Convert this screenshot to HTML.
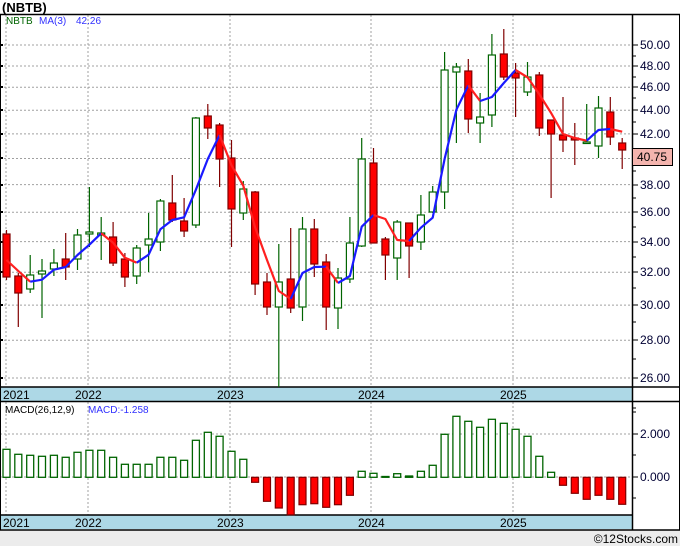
<!DOCTYPE html>
<html><head><meta charset="utf-8"><style>
html,body{margin:0;padding:0;background:#fff;}
svg{display:block;font-family:"Liberation Sans",sans-serif;}
</style></head><body>
<svg width="680" height="546" viewBox="0 0 680 546" xmlns="http://www.w3.org/2000/svg">
<rect x="0" y="0" width="680" height="546" fill="#fff"/>
<rect x="0" y="530" width="680" height="16" fill="#ececec"/>
<text x="2" y="12" font-size="13" font-weight="bold" fill="#000">(NBTB)</text>
<!-- grids -->
<g stroke="#a0a0a0" stroke-width="1" stroke-dasharray="2,2" fill="none">
<line x1="0" x2="632" y1="45" y2="45"/><line x1="0" x2="632" y1="66" y2="66"/><line x1="0" x2="632" y1="87.3" y2="87.3"/><line x1="0" x2="632" y1="110.2" y2="110.2"/><line x1="0" x2="632" y1="133.9" y2="133.9"/><line x1="0" x2="632" y1="158.5" y2="158.5"/><line x1="0" x2="632" y1="184.6" y2="184.6"/><line x1="0" x2="632" y1="212.2" y2="212.2"/><line x1="0" x2="632" y1="241.6" y2="241.6"/><line x1="0" x2="632" y1="272.2" y2="272.2"/><line x1="0" x2="632" y1="305.1" y2="305.1"/><line x1="0" x2="632" y1="340.2" y2="340.2"/><line x1="0" x2="632" y1="378" y2="378"/>
<line x1="0" x2="632" y1="434" y2="434"/><line x1="0" x2="632" y1="477" y2="477"/>
<line x1="6" x2="6" y1="15" y2="387"/><line x1="88" x2="88" y1="15" y2="387"/><line x1="230" x2="230" y1="15" y2="387"/><line x1="371" x2="371" y1="15" y2="387"/><line x1="513" x2="513" y1="15" y2="387"/>
<line x1="6" x2="6" y1="402" y2="515"/><line x1="88" x2="88" y1="402" y2="515"/><line x1="230" x2="230" y1="402" y2="515"/><line x1="371" x2="371" y1="402" y2="515"/><line x1="513" x2="513" y1="402" y2="515"/>
</g>
<!-- date bands -->
<rect x="0" y="387" width="632" height="14" fill="#add8e6"/>
<rect x="0" y="515" width="632" height="14" fill="#add8e6"/>
<g font-size="12" fill="#000">
<text x="3" y="399">2021</text><text x="75" y="399">2022</text><text x="217" y="399">2023</text><text x="358" y="399">2024</text><text x="500" y="399">2025</text>
<text x="3" y="527">2021</text><text x="75" y="527">2022</text><text x="217" y="527">2023</text><text x="358" y="527">2024</text><text x="500" y="527">2025</text>
</g>
<!-- frame -->
<g stroke="#000" fill="none">
<line x1="0" x2="680" y1="14.5" y2="14.5" stroke-width="1.5"/>
<line x1="0" x2="680" y1="387" y2="387" stroke-width="1.5"/>
<line x1="0" x2="680" y1="401.5" y2="401.5" stroke-width="1.5"/>
<line x1="0" x2="632" y1="515" y2="515" stroke-width="1.5"/>
<line x1="0" x2="680" y1="530" y2="530" stroke-width="1.5"/>
<line x1="632.5" x2="632.5" y1="14" y2="530" stroke-width="1.5"/>
<line x1="679.5" x2="679.5" y1="14" y2="530" stroke-width="1"/>
<line x1="0.5" x2="0.5" y1="14" y2="530" stroke-width="1"/>
</g>
<g stroke="#000" stroke-width="2">
<line x1="0" x2="3" y1="45" y2="45"/><line x1="0" x2="3" y1="66" y2="66"/><line x1="0" x2="3" y1="87" y2="87"/><line x1="0" x2="3" y1="110" y2="110"/><line x1="0" x2="3" y1="134" y2="134"/><line x1="0" x2="3" y1="158" y2="158"/><line x1="0" x2="3" y1="185" y2="185"/><line x1="0" x2="3" y1="212" y2="212"/><line x1="0" x2="3" y1="242" y2="242"/><line x1="0" x2="3" y1="272" y2="272"/><line x1="0" x2="3" y1="305" y2="305"/><line x1="0" x2="3" y1="340" y2="340"/><line x1="0" x2="3" y1="378" y2="378"/>
</g>
<g stroke="#000" stroke-width="1">
<line x1="632" x2="638" y1="45" y2="45"/><line x1="632" x2="638" y1="66" y2="66"/><line x1="632" x2="638" y1="87" y2="87"/><line x1="632" x2="638" y1="110" y2="110"/><line x1="632" x2="638" y1="134" y2="134"/><line x1="632" x2="638" y1="158" y2="158"/><line x1="632" x2="638" y1="185" y2="185"/><line x1="632" x2="638" y1="212" y2="212"/><line x1="632" x2="638" y1="242" y2="242"/><line x1="632" x2="638" y1="272" y2="272"/><line x1="632" x2="638" y1="305" y2="305"/><line x1="632" x2="638" y1="340" y2="340"/><line x1="632" x2="638" y1="378" y2="378"/>
<line x1="632" x2="636" y1="56" y2="56"/><line x1="632" x2="636" y1="77" y2="77"/><line x1="632" x2="636" y1="98" y2="98"/><line x1="632" x2="636" y1="122" y2="122"/><line x1="632" x2="636" y1="171" y2="171"/><line x1="632" x2="636" y1="198" y2="198"/><line x1="632" x2="636" y1="227" y2="227"/><line x1="632" x2="636" y1="257" y2="257"/><line x1="632" x2="636" y1="288" y2="288"/><line x1="632" x2="636" y1="322" y2="322"/><line x1="632" x2="636" y1="359" y2="359"/>
<line x1="632" x2="638" y1="434" y2="434"/><line x1="632" x2="638" y1="477" y2="477"/><line x1="632" x2="636" y1="412" y2="412"/><line x1="632" x2="636" y1="455" y2="455"/><line x1="632" x2="636" y1="498" y2="498"/>
<line x1="632" x2="636" y1="408" y2="408"/>
</g>
<g font-size="12" fill="#000033">
<text x="640" y="49">50.00</text><text x="640" y="70">48.00</text><text x="640" y="91">46.00</text><text x="640" y="114">44.00</text><text x="640" y="138">42.00</text><text x="640" y="189">38.00</text><text x="640" y="216">36.00</text><text x="640" y="246">34.00</text><text x="640" y="276">32.00</text><text x="640" y="309">30.00</text><text x="640" y="344">28.00</text><text x="640" y="382">26.00</text>
<text x="640" y="438">2.000</text><text x="640" y="481">0.000</text>
</g>
<rect x="632.5" y="148.5" width="40" height="17" fill="#f4b4ae" stroke="#000"/>
<text x="637" y="161" font-size="12" fill="#000">40.75</text>
<!-- legend -->
<text x="6" y="24" font-size="10" fill="#006400">NBTB</text>
<text x="39" y="24" font-size="10" fill="#3030ff">MA(3)</text>
<text x="76" y="24" font-size="10" fill="#3030ff">42.26</text>
<text x="5" y="413" font-size="10" fill="#000">MACD(26,12,9)</text>
<text x="88" y="413" font-size="10" fill="#3030ff">MACD:-1.258</text>
<text x="678" y="543" font-size="12" fill="#000" text-anchor="end">©12Stocks.com</text>
<!-- candles green -->
<g stroke="#006400" stroke-width="1.2" fill="#fff">
<line x1="30.2" x2="30.2" y1="255" y2="293"/><rect x="26.7" y="275" width="7" height="14"/>
<line x1="42" x2="42" y1="259" y2="318"/><rect x="38.5" y="271" width="7" height="3"/>
<line x1="53.9" x2="53.9" y1="249" y2="276"/><rect x="50.4" y="263" width="7" height="6"/>
<line x1="77.5" x2="77.5" y1="229" y2="270"/><rect x="74" y="235" width="7" height="24"/>
<line x1="89.4" x2="89.4" y1="187" y2="247"/><rect x="85.9" y="232" width="7" height="2"/>
<line x1="101.2" x2="101.2" y1="217" y2="260"/><rect x="97.7" y="233" width="7" height="2"/>
<line x1="136.7" x2="136.7" y1="245" y2="284"/><rect x="133.2" y="248" width="7" height="28"/>
<line x1="148.6" x2="148.6" y1="213" y2="272"/><rect x="145.1" y="239" width="7" height="6"/>
<line x1="160.4" x2="160.4" y1="199" y2="251"/><rect x="156.9" y="201" width="7" height="41"/>
<line x1="195.9" x2="195.9" y1="117" y2="228"/><rect x="192.4" y="118" width="7" height="107"/>
<line x1="243.3" x2="243.3" y1="181" y2="220"/><rect x="239.8" y="189" width="7" height="24"/>
<line x1="278.8" x2="278.8" y1="244" y2="387"/><rect x="275.3" y="282" width="7" height="25"/>
<line x1="302.5" x2="302.5" y1="217" y2="321"/><rect x="299" y="229" width="7" height="78"/>
<line x1="338" x2="338" y1="268" y2="329"/><rect x="334.5" y="278" width="7" height="30"/>
<line x1="349.9" x2="349.9" y1="217" y2="283"/><rect x="346.4" y="243" width="7" height="36"/>
<line x1="361.7" x2="361.7" y1="138" y2="247"/><rect x="358.2" y="159" width="7" height="87"/>
<line x1="397.2" x2="397.2" y1="220" y2="280"/><rect x="393.7" y="222" width="7" height="36"/>
<line x1="420.9" x2="420.9" y1="195" y2="250"/><rect x="417.4" y="215" width="7" height="27"/>
<line x1="432.7" x2="432.7" y1="186" y2="213"/><rect x="429.2" y="192" width="7" height="20"/>
<line x1="444.6" x2="444.6" y1="52" y2="209"/><rect x="441.1" y="70" width="7" height="122"/>
<line x1="456.4" x2="456.4" y1="63" y2="143"/><rect x="452.9" y="67" width="7" height="5"/>
<line x1="480.1" x2="480.1" y1="93" y2="143"/><rect x="476.6" y="117" width="7" height="6"/>
<line x1="491.9" x2="491.9" y1="34" y2="127"/><rect x="488.4" y="55" width="7" height="60"/>
<line x1="527.5" x2="527.5" y1="62" y2="96"/><rect x="524" y="77" width="7" height="15"/>
<line x1="586.7" x2="586.7" y1="104" y2="144"/><rect x="583.2" y="142" width="7" height="1.5"/>
<line x1="598.5" x2="598.5" y1="96" y2="158"/><rect x="595" y="108" width="7" height="38"/>
</g>
<!-- candles red -->
<g stroke="#800000" stroke-width="1.2" fill="#ff0000">
<line x1="6.5" x2="6.5" y1="230" y2="280"/><rect x="3" y="234" width="7" height="43"/>
<line x1="18.3" x2="18.3" y1="273" y2="327"/><rect x="14.8" y="276" width="7" height="17"/>
<line x1="65.7" x2="65.7" y1="233" y2="280"/><rect x="62.2" y="259" width="7" height="8"/>
<line x1="113.1" x2="113.1" y1="222" y2="266"/><rect x="109.6" y="237" width="7" height="26"/>
<line x1="124.9" x2="124.9" y1="253" y2="287"/><rect x="121.4" y="259" width="7" height="18"/>
<line x1="172.3" x2="172.3" y1="175" y2="222"/><rect x="168.8" y="203" width="7" height="17"/>
<line x1="184.1" x2="184.1" y1="198" y2="237"/><rect x="180.6" y="221" width="7" height="10"/>
<line x1="207.8" x2="207.8" y1="104" y2="139"/><rect x="204.3" y="116" width="7" height="12"/>
<line x1="219.6" x2="219.6" y1="123" y2="187"/><rect x="216.1" y="125" width="7" height="34"/>
<line x1="231.5" x2="231.5" y1="140" y2="247"/><rect x="228" y="158" width="7" height="51"/>
<line x1="255.1" x2="255.1" y1="191" y2="295"/><rect x="251.6" y="192" width="7" height="92"/>
<line x1="267" x2="267" y1="273" y2="315"/><rect x="263.5" y="282" width="7" height="25"/>
<line x1="290.7" x2="290.7" y1="228" y2="313"/><rect x="287.2" y="279" width="7" height="29"/>
<line x1="314.3" x2="314.3" y1="219" y2="277"/><rect x="310.8" y="229" width="7" height="35"/>
<line x1="326.2" x2="326.2" y1="254" y2="330"/><rect x="322.7" y="262" width="7" height="45"/>
<line x1="373.5" x2="373.5" y1="148" y2="243"/><rect x="370" y="163" width="7" height="80"/>
<line x1="385.4" x2="385.4" y1="237" y2="280"/><rect x="381.9" y="239" width="7" height="16"/>
<line x1="409.1" x2="409.1" y1="223" y2="278"/><rect x="405.6" y="223" width="7" height="23"/>
<line x1="468.3" x2="468.3" y1="59" y2="133"/><rect x="464.8" y="71" width="7" height="48"/>
<line x1="503.8" x2="503.8" y1="29" y2="80"/><rect x="500.3" y="54" width="7" height="23"/>
<line x1="515.6" x2="515.6" y1="63" y2="117"/><rect x="512.1" y="73" width="7" height="5"/>
<line x1="539.3" x2="539.3" y1="72" y2="136"/><rect x="535.8" y="75" width="7" height="53"/>
<line x1="551.1" x2="551.1" y1="120" y2="198"/><rect x="547.6" y="120" width="7" height="14"/>
<line x1="563" x2="563" y1="97" y2="152"/><rect x="559.5" y="135" width="7" height="5"/>
<line x1="574.8" x2="574.8" y1="123" y2="165"/><rect x="571.3" y="138" width="7" height="2"/>
<line x1="610.3" x2="610.3" y1="97" y2="145"/><rect x="606.8" y="112" width="7" height="25"/>
<line x1="622.2" x2="622.2" y1="138" y2="169"/><rect x="618.7" y="143" width="7" height="7"/>
</g>
<!-- MA line -->
<g fill="none" stroke-width="2.2" stroke-linejoin="round">
<polyline stroke="#ff2020" points="6.5,260 18.3,271 30.2,281.7"/>
<polyline stroke="#1a1aff" points="30.2,281.7 42,279.7 53.9,269.7 65.7,267 77.5,255 89.4,244.7 101.2,233.3"/>
<polyline stroke="#ff2020" points="101.2,233.3 113.1,242.7 124.9,257.7 136.7,262.7"/>
<polyline stroke="#1a1aff" points="136.7,262.7 148.6,254.7 160.4,229.3 172.3,220 184.1,217.3 195.9,189.7 207.8,159 219.6,135"/>
<polyline stroke="#ff2020" points="219.6,135 231.5,165.3 243.3,185.7 255.1,227.3 267,260 278.8,291 290.7,299"/>
<polyline stroke="#1a1aff" points="290.7,299 302.5,273 314.3,267 326.2,266.7"/>
<polyline stroke="#ff2020" points="326.2,266.7 338,283"/>
<polyline stroke="#1a1aff" points="338,283 349.9,276 361.7,226.7 373.5,215"/>
<polyline stroke="#ff2020" points="373.5,215 385.4,219 397.2,240 409.1,241"/>
<polyline stroke="#1a1aff" points="409.1,241 420.9,227.7 432.7,217.7 444.6,159 456.4,109.7 468.3,85.3"/>
<polyline stroke="#ff2020" points="468.3,85.3 480.1,101"/>
<polyline stroke="#1a1aff" points="480.1,101 491.9,97 503.8,83 515.6,70"/>
<polyline stroke="#ff2020" points="515.6,70 527.5,77.3 539.3,94.3 551.1,113 563,134 574.8,138 586.7,140.7"/>
<polyline stroke="#1a1aff" points="586.7,140.7 598.5,130 610.3,129"/>
<polyline stroke="#ff2020" points="610.3,129 622.2,131.7"/>
</g>
<!-- MACD green -->
<g stroke="#006400" stroke-width="1.3" fill="#fff">
<rect x="3" y="449.3" width="7" height="28"/><rect x="14.8" y="454.3" width="7" height="23"/><rect x="26.7" y="455.3" width="7" height="22"/><rect x="38.5" y="456.3" width="7" height="21"/><rect x="50.4" y="455.3" width="7" height="22"/><rect x="62.2" y="457.3" width="7" height="20"/><rect x="74" y="452.3" width="7" height="25"/><rect x="85.9" y="450.3" width="7" height="27"/><rect x="97.7" y="450.3" width="7" height="27"/><rect x="109.6" y="457.3" width="7" height="20"/><rect x="121.4" y="464.3" width="7" height="13"/><rect x="133.2" y="464.3" width="7" height="13"/><rect x="145.1" y="464.3" width="7" height="13"/><rect x="156.9" y="457.3" width="7" height="20"/><rect x="168.8" y="457.3" width="7" height="20"/><rect x="180.6" y="460.3" width="7" height="17"/><rect x="192.4" y="440.3" width="7" height="37"/><rect x="204.3" y="432.3" width="7" height="45"/><rect x="216.1" y="436.3" width="7" height="41"/><rect x="228" y="451.3" width="7" height="26"/><rect x="239.8" y="459.3" width="7" height="18"/>
<rect x="358.2" y="471.3" width="7" height="6"/><rect x="370" y="473.3" width="7" height="4"/><rect x="381.9" y="476.5" width="7" height="0.8"/><rect x="393.7" y="473.7" width="7" height="3.6"/><rect x="405.6" y="476" width="7" height="1.3" fill="#006400"/><rect x="417.4" y="471.3" width="7" height="6"/><rect x="429.2" y="465.3" width="7" height="12"/><rect x="441.1" y="434.3" width="7" height="43"/><rect x="452.9" y="416.3" width="7" height="61"/><rect x="464.8" y="421.3" width="7" height="56"/><rect x="476.6" y="427.3" width="7" height="50"/><rect x="488.4" y="419.3" width="7" height="58"/><rect x="500.3" y="423.3" width="7" height="54"/><rect x="512.1" y="429.3" width="7" height="48"/><rect x="524" y="436.3" width="7" height="41"/><rect x="535.8" y="456.3" width="7" height="21"/><rect x="547.6" y="472.3" width="7" height="5"/>
</g>
<g stroke="#800000" stroke-width="1.2" fill="#ff0000">
<rect x="251.6" y="477.3" width="7" height="5"/><rect x="263.5" y="477.3" width="7" height="24"/><rect x="275.3" y="477.3" width="7" height="30.7"/><rect x="287.2" y="477.3" width="7" height="37.5"/><rect x="299" y="477.3" width="7" height="27.4"/><rect x="310.8" y="477.3" width="7" height="26.4"/><rect x="322.7" y="477.3" width="7" height="30"/><rect x="334.5" y="477.3" width="7" height="27.4"/><rect x="346.4" y="477.3" width="7" height="18"/>
<rect x="559.5" y="477.3" width="7" height="8"/><rect x="571.3" y="477.3" width="7" height="16"/><rect x="583.2" y="477.3" width="7" height="22"/><rect x="595" y="477.3" width="7" height="18"/><rect x="606.8" y="477.3" width="7" height="22"/><rect x="618.7" y="477.3" width="7" height="27"/>
</g>
</svg>
</body></html>
